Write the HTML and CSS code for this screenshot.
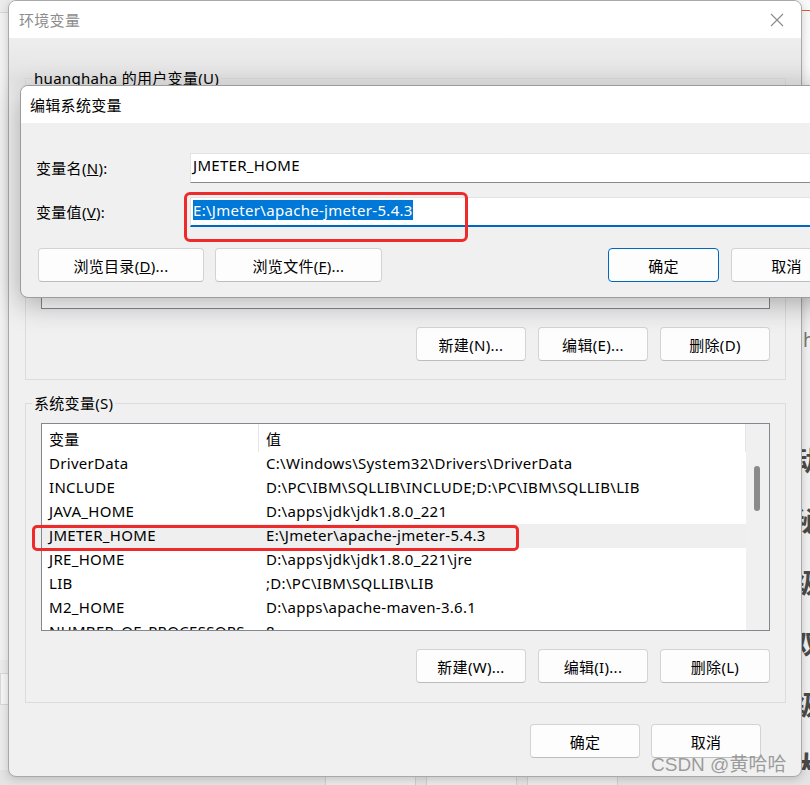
FILE: index.html
```html
<!DOCTYPE html>
<html lang="zh-CN">
<head>
<meta charset="utf-8">
<title>环境变量</title>
<link rel="stylesheet" href="styles.css">
</head>
<body>
<div class="desktop">
  <div class="bg-left"><div class="bg-left-panel"></div><div class="bg-left-box"></div></div>
  <div class="bg-topright"></div>
  <div class="bg-glyphs">
    <span class="g-h">h</span>
    <span class="g-big g1">动</span>
    <span class="g-big g2">秘</span>
    <span class="g-big g3">级</span>
    <span class="g-big g4">双</span>
    <span class="g-big g5">级</span>
    <span class="g-big g6">大</span>
  </div>
  <div class="bg-bottom">
    <span class="bg-btn"></span><span class="bg-btn"></span><span class="bg-btn"></span>
  </div>

  <div class="envwin">
    <div class="titlebar">
      <span class="wintitle">环境变量</span>
      <svg class="closeico" width="14" height="14" viewBox="0 0 14 14"><path d="M1 1 L13 13 M13 1 L1 13" stroke="#8a8a8a" stroke-width="1.1" fill="none"/></svg>
    </div>
    <div class="envbody">
      <fieldset class="group group-user">
        <legend>huanghaha 的用户变量(U)</legend>
        <div class="listbox listbox-user"></div>
        <div class="btnrow">
          <button class="btn">新建(N)...</button>
          <button class="btn">编辑(E)...</button>
          <button class="btn">删除(D)</button>
        </div>
      </fieldset>
      <fieldset class="group group-sys">
        <legend>系统变量(S)</legend>
        <div class="listbox listbox-sys">
          <div class="lv">
            <div class="lv-head">
              <div class="c1">变量</div>
              <div class="c2">值</div>
            </div>
            <div class="lv-row"><div class="c1">DriverData</div><div class="c2">C:\Windows\System32\Drivers\DriverData</div></div>
            <div class="lv-row"><div class="c1">INCLUDE</div><div class="c2">D:\PC\IBM\SQLLIB\INCLUDE;D:\PC\IBM\SQLLIB\LIB</div></div>
            <div class="lv-row"><div class="c1">JAVA_HOME</div><div class="c2">D:\apps\jdk\jdk1.8.0_221</div></div>
            <div class="lv-row sel"><div class="c1">JMETER_HOME</div><div class="c2">E:\Jmeter\apache-jmeter-5.4.3</div></div>
            <div class="lv-row"><div class="c1">JRE_HOME</div><div class="c2">D:\apps\jdk\jdk1.8.0_221\jre</div></div>
            <div class="lv-row"><div class="c1">LIB</div><div class="c2">;D:\PC\IBM\SQLLIB\LIB</div></div>
            <div class="lv-row"><div class="c1">M2_HOME</div><div class="c2">D:\apps\apache-maven-3.6.1</div></div>
            <div class="lv-row"><div class="c1">NUMBER_OF_PROCESSORS</div><div class="c2">8</div></div>
          </div>
          <div class="vscroll"><div class="thumb"></div></div>
        </div>
        <div class="btnrow btnrow-sys">
          <button class="btn">新建(W)...</button>
          <button class="btn">编辑(I)...</button>
          <button class="btn">删除(L)</button>
        </div>
      </fieldset>
      <div class="footer">
        <button class="btn">确定</button>
        <button class="btn">取消</button>
      </div>
    </div>
  </div>

  <div class="editdlg">
    <div class="dlg-titlebar">编辑系统变量</div>
    <div class="dlg-body">
      <div class="field">
        <label class="flabel">变量名(<u>N</u>):</label>
        <div class="finput">JMETER_HOME</div>
      </div>
      <div class="field field-2">
        <label class="flabel">变量值(<u>V</u>):</label>
        <div class="finput focused"><span class="selected">E:\Jmeter\apache-jmeter-5.4.3</span></div>
      </div>
      <div class="dlg-btns">
        <button class="btn btn-wide">浏览目录(<u>D</u>)...</button>
        <button class="btn btn-wide btn-wide2">浏览文件(<u>F</u>)...</button>
        <button class="btn btn-dlg btn-default">确定</button>
        <button class="btn btn-dlg">取消</button>
      </div>
    </div>
  </div>

  <div class="mark mark-input"></div>
  <div class="mark mark-row"></div>
  <div class="watermark">CSDN @黄哈哈</div>
</div>
</body>
</html>
```

FILE: styles.css
```css
* { box-sizing: border-box; }

body {
  margin: 0;
  width: 810px;
  height: 785px;
  overflow: hidden;
  background: #eeeeee;
  font-family: "Noto Sans", "Noto Sans CJK SC", sans-serif;
  font-size: 15px;
  letter-spacing: 0.3px;
  color: #000;
}

.desktop {
  position: relative;
  width: 810px;
  height: 785px;
  overflow: hidden;
  background: #f1f1f1;
}

/* background windows peeking out */
.bg-left {
  position: absolute;
  left: 0;
  top: 0;
  width: 10px;
  height: 785px;
  background: #ececec;
}
.bg-left-panel {
  margin-top: 12px;
  height: 648px;
  border-top: 1px solid #d6d6d6;
  border-right: 1px solid #dadada;
  background: #f2f2f2;
}
.bg-left-box {
  margin-top: 13px;
  height: 32px;
  border: 1px solid #d8d8d8;
  background: #f6f6f6;
}

.bg-topright {
  position: absolute;
  left: 796px;
  top: 0;
  width: 14px;
  height: 90px;
  background: #fafafa;
  border-top: 10px solid #fafafa;
  box-shadow: inset 0 1px 0 #f05a28;
}

.bg-glyphs {
  position: absolute;
  left: 802px;
  top: 320px;
  width: 30px;
  display: flex;
  flex-direction: column;
  color: #4a4a4a;
  font-weight: 700;
  letter-spacing: 0;
}
.g-h { font-size: 19px; font-weight: 400; color: #777; height: 110px; line-height: 40px; padding-left: 1px; }
.g-big { font-size: 27px; line-height: 61px; height: 61px; margin-left: -9px; }

.bg-bottom {
  position: absolute;
  left: 0;
  top: 770px;
  width: 810px;
  height: 15px;
  background: #e4e4e4;
  display: flex;
  padding-left: 325px;
  gap: 10px;
}
.bg-btn {
  width: 91px;
  height: 30px;
  border: 1px solid #cfcfcf;
  border-radius: 4px;
  background: #ebebeb;
}

/* main window */
.envwin {
  position: absolute;
  left: 8px;
  top: 0;
  width: 794px;
  height: 777px;
  background: #f0f0f0;
  border: 1px solid #a9a9a9;
  border-radius: 8px;
  overflow: hidden;
  box-shadow: 0 2px 10px rgba(0, 0, 0, 0.18);
}

.titlebar {
  height: 37px;
  background: #fff;
  display: flex;
  align-items: center;
  justify-content: space-between;
  padding: 0 17px 0 10px;
}
.wintitle {
  color: #8d8d8d;
  font-size: 15px;
}
.closeico { display: block; }

.envbody {
  padding: 30px 15px 0 16px;
  background: linear-gradient(#eeeeee, #e4e4e4 40px, #f0f0f0 60px);
}

.group {
  margin: 0;
  border: 1px solid #dcdcdc;
  min-width: 0;
}
.group legend {
  margin-left: -9px;
  padding: 0 2px;
  line-height: 20px;
  font-size: 15px;
  color: #000;
}
.group-user {
  padding: 10px 15px 18px 15px;
}
.group-sys {
  margin-top: 13px;
  padding: 10px 15px 19px 15px;
}

.listbox {
  border: 1px solid #828790;
  background: #fff;
}
.listbox-user {
  height: 211px;
}
.listbox-sys {
  height: 208px;
  display: flex;
  overflow: hidden;
}

.lv {
  flex: 1;
  overflow: hidden;
}
.lv-head, .lv-row {
  display: flex;
  white-space: nowrap;
}
.lv-head {
  height: 28px;
  line-height: 30px;
  border-right: 1px solid #e5e5e5;
}
.lv-head .c1 {
  border-right: 1px solid #e5e5e5;
}
.lv-row {
  height: 24px;
  line-height: 23px;
}
.lv-row.sel {
  background: #efefef;
}
.c1 {
  width: 217px;
  padding-left: 7px;
  flex: none;
}
.c2 {
  padding-left: 7px;
}

.vscroll {
  width: 23px;
  flex: none;
  background: #f0f0f0;
}
.thumb {
  margin: 42px 0 0 8px;
  width: 6px;
  height: 45px;
  border-radius: 3px;
  background: #8a8a8a;
}

.btnrow {
  display: flex;
  justify-content: flex-end;
  gap: 12px;
  margin-top: 18px;
}

.btn {
  width: 110px;
  height: 34px;
  padding: 0;
  font-family: "Noto Sans", "Noto Sans CJK SC", sans-serif;
  font-size: 15px;
  letter-spacing: 0.3px;
  color: #000;
  background: #fdfdfd;
  border: 1px solid #d3d3d3;
  border-bottom-color: #bdbdbd;
  border-radius: 4px;
  flex: none;
}

.footer {
  display: flex;
  justify-content: flex-end;
  gap: 11px;
  margin-top: 21px;
  padding-right: 25px;
}

/* edit dialog */
.editdlg {
  position: absolute;
  left: 20px;
  top: 85px;
  width: 830px;
  height: 213px;
  background: #f0f0f0;
  border: 1px solid #9c9c9c;
  border-radius: 8px;
  overflow: hidden;
  box-shadow: 0 6px 28px rgba(0, 0, 0, 0.3);
}
.dlg-titlebar {
  height: 37px;
  background: #fff;
  padding-left: 9px;
  line-height: 38px;
  font-size: 15px;
}
.dlg-body {
  padding: 30px 0 0 15px;
}
.field {
  display: flex;
  align-items: center;
}
.field-2 {
  margin-top: 14px;
}
.flabel {
  width: 154px;
  flex: none;
  padding-bottom: 2px;
}
.finput {
  flex: 1;
  height: 30px;
  background: #fff;
  border: 1px solid #e3e3e3;
  border-bottom: 1px solid #8a8a8a;
  border-right: none;
  padding-left: 2px;
  line-height: 23px;
  white-space: nowrap;
}
.finput.focused {
  border-bottom: 2px solid #0067c0;
  line-height: 25px;
}
.selected {
  background: #0078d7;
  color: #fff;
  display: inline-block;
  line-height: 20px;
}

.dlg-btns {
  display: flex;
  margin-top: 21px;
  padding-left: 2px;
}
.btn-wide {
  width: 166px;
}
.btn-wide2 {
  width: 167px;
  margin-left: 11px;
}
.btn-dlg {
  width: 111px;
}
.btn-default {
  margin-left: 226px;
  border: 1px solid #0067c0;
}
.btn-dlg + .btn-dlg {
  margin-left: 12px;
}

/* annotations */
.mark {
  position: absolute;
  border: 3px solid #ee2a2a;
  border-radius: 6px;
}
.mark-input {
  left: 184px;
  top: 192px;
  width: 284px;
  height: 50px;
}
.mark-row {
  left: 32px;
  top: 525px;
  width: 487px;
  height: 26px;
  border-radius: 5px;
}

.watermark {
  position: absolute;
  left: 651px;
  top: 752px;
  font-size: 19px;
  line-height: 26px;
  letter-spacing: 0;
  color: rgba(140, 140, 140, 0.85);
  font-family: "Liberation Sans", "Noto Sans CJK SC", sans-serif;
  white-space: nowrap;
}
```
